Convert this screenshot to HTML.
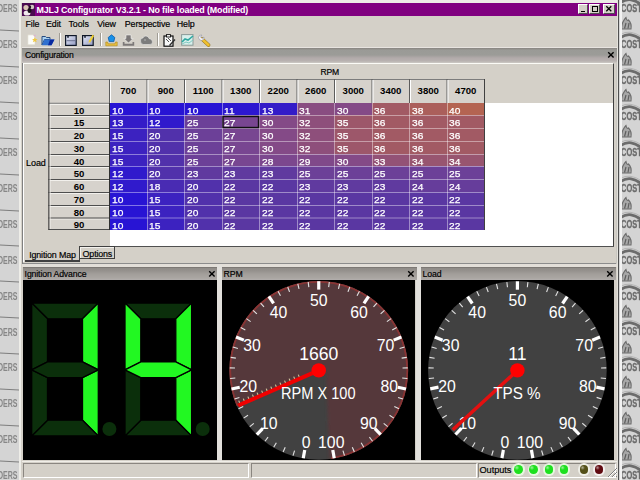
<!DOCTYPE html><html><head><meta charset="utf-8"><style>
*{margin:0;padding:0;box-sizing:border-box}
html,body{width:640px;height:480px;overflow:hidden;background:#d5d5d5;font-family:"Liberation Sans", sans-serif;}
.a{position:absolute}
.t{position:absolute;white-space:nowrap;line-height:1}
</style></head><body>
<div class="a" style="left:0;top:0;width:20px;height:480px;background:#d4d4d4;overflow:hidden">
<div class="t" style="right:2.3px;top:3.4px;font-size:11px;font-weight:bold;color:#878787;transform:scaleX(0.64);transform-origin:right">DERS</div>
<div class="a" style="left:-1px;top:30.0px;width:20px;height:1.3px;background:#7e7e7e;transform:rotate(2.5deg)"></div>
<div class="t" style="right:2.3px;top:39.3px;font-size:11px;font-weight:bold;color:#878787;transform:scaleX(0.64);transform-origin:right">DERS</div>
<div class="a" style="left:-1px;top:65.9px;width:20px;height:1.3px;background:#7e7e7e;transform:rotate(2.5deg)"></div>
<div class="t" style="right:2.3px;top:75.2px;font-size:11px;font-weight:bold;color:#878787;transform:scaleX(0.64);transform-origin:right">DERS</div>
<div class="a" style="left:-1px;top:101.8px;width:20px;height:1.3px;background:#7e7e7e;transform:rotate(2.5deg)"></div>
<div class="t" style="right:2.3px;top:111.1px;font-size:11px;font-weight:bold;color:#878787;transform:scaleX(0.64);transform-origin:right">DERS</div>
<div class="a" style="left:-1px;top:137.7px;width:20px;height:1.3px;background:#7e7e7e;transform:rotate(2.5deg)"></div>
<div class="t" style="right:2.3px;top:147.0px;font-size:11px;font-weight:bold;color:#878787;transform:scaleX(0.64);transform-origin:right">DERS</div>
<div class="a" style="left:-1px;top:173.6px;width:20px;height:1.3px;background:#7e7e7e;transform:rotate(2.5deg)"></div>
<div class="t" style="right:2.3px;top:182.9px;font-size:11px;font-weight:bold;color:#878787;transform:scaleX(0.64);transform-origin:right">DERS</div>
<div class="a" style="left:-1px;top:209.5px;width:20px;height:1.3px;background:#7e7e7e;transform:rotate(2.5deg)"></div>
<div class="t" style="right:2.3px;top:218.8px;font-size:11px;font-weight:bold;color:#878787;transform:scaleX(0.64);transform-origin:right">DERS</div>
<div class="a" style="left:-1px;top:245.4px;width:20px;height:1.3px;background:#7e7e7e;transform:rotate(2.5deg)"></div>
<div class="t" style="right:2.3px;top:254.7px;font-size:11px;font-weight:bold;color:#878787;transform:scaleX(0.64);transform-origin:right">DERS</div>
<div class="a" style="left:-1px;top:281.3px;width:20px;height:1.3px;background:#7e7e7e;transform:rotate(2.5deg)"></div>
<div class="t" style="right:2.3px;top:290.6px;font-size:11px;font-weight:bold;color:#878787;transform:scaleX(0.64);transform-origin:right">DERS</div>
<div class="a" style="left:-1px;top:317.2px;width:20px;height:1.3px;background:#7e7e7e;transform:rotate(2.5deg)"></div>
<div class="t" style="right:2.3px;top:326.5px;font-size:11px;font-weight:bold;color:#878787;transform:scaleX(0.64);transform-origin:right">DERS</div>
<div class="a" style="left:-1px;top:353.1px;width:20px;height:1.3px;background:#7e7e7e;transform:rotate(2.5deg)"></div>
<div class="t" style="right:2.3px;top:362.4px;font-size:11px;font-weight:bold;color:#878787;transform:scaleX(0.64);transform-origin:right">DERS</div>
<div class="a" style="left:-1px;top:389.0px;width:20px;height:1.3px;background:#7e7e7e;transform:rotate(2.5deg)"></div>
<div class="t" style="right:2.3px;top:398.3px;font-size:11px;font-weight:bold;color:#878787;transform:scaleX(0.64);transform-origin:right">DERS</div>
<div class="a" style="left:-1px;top:424.9px;width:20px;height:1.3px;background:#7e7e7e;transform:rotate(2.5deg)"></div>
<div class="t" style="right:2.3px;top:434.2px;font-size:11px;font-weight:bold;color:#878787;transform:scaleX(0.64);transform-origin:right">DERS</div>
<div class="a" style="left:-1px;top:460.8px;width:20px;height:1.3px;background:#7e7e7e;transform:rotate(2.5deg)"></div>
<div class="t" style="right:2.3px;top:470.1px;font-size:11px;font-weight:bold;color:#878787;transform:scaleX(0.64);transform-origin:right">DERS</div>
<div class="a" style="left:-1px;top:496.7px;width:20px;height:1.3px;background:#7e7e7e;transform:rotate(2.5deg)"></div>
</div>
<div class="a" style="left:620px;top:0;width:20px;height:480px;background:#d4d4d4;overflow:hidden">
<div class="t" style="left:1px;top:3.3px;font-size:11px;font-weight:bold;color:#6c6c6c;-webkit-text-stroke:0.35px #6c6c6c;transform:scaleX(0.68);transform-origin:left">COST</div>
<svg class="a" style="left:0;top:-19.5px" width="20" height="24"><path d="M1.5 13 C1.5 8 3.5 4 6 1.5 C6.5 4 7.5 5 8.5 4 C10.5 6 11.5 10 11 13 Z" fill="#a8a8a8" stroke="#6c6c6c" stroke-width="1.1"/><path d="M4.5 12.5 L6 7 M8 12.5 L9 7" stroke="#606060" stroke-width="1.2"/><path d="M0 18.8 Q5 15.5 10 16.2 Q16 17 21 20.5" stroke="#b4b4b4" stroke-width="1" fill="none"/><path d="M0 21.8 Q6 18 11 18.8 Q16 19.6 21 23.5" stroke="#6c6c6c" stroke-width="2.8" fill="none"/></svg>
<div class="t" style="left:1px;top:39.2px;font-size:11px;font-weight:bold;color:#6c6c6c;-webkit-text-stroke:0.35px #6c6c6c;transform:scaleX(0.68);transform-origin:left">COST</div>
<svg class="a" style="left:0;top:16.4px" width="20" height="24"><path d="M1.5 13 C1.5 8 3.5 4 6 1.5 C6.5 4 7.5 5 8.5 4 C10.5 6 11.5 10 11 13 Z" fill="#a8a8a8" stroke="#6c6c6c" stroke-width="1.1"/><path d="M4.5 12.5 L6 7 M8 12.5 L9 7" stroke="#606060" stroke-width="1.2"/><path d="M0 18.8 Q5 15.5 10 16.2 Q16 17 21 20.5" stroke="#b4b4b4" stroke-width="1" fill="none"/><path d="M0 21.8 Q6 18 11 18.8 Q16 19.6 21 23.5" stroke="#6c6c6c" stroke-width="2.8" fill="none"/></svg>
<div class="t" style="left:1px;top:75.1px;font-size:11px;font-weight:bold;color:#6c6c6c;-webkit-text-stroke:0.35px #6c6c6c;transform:scaleX(0.68);transform-origin:left">COST</div>
<svg class="a" style="left:0;top:52.3px" width="20" height="24"><path d="M1.5 13 C1.5 8 3.5 4 6 1.5 C6.5 4 7.5 5 8.5 4 C10.5 6 11.5 10 11 13 Z" fill="#a8a8a8" stroke="#6c6c6c" stroke-width="1.1"/><path d="M4.5 12.5 L6 7 M8 12.5 L9 7" stroke="#606060" stroke-width="1.2"/><path d="M0 18.8 Q5 15.5 10 16.2 Q16 17 21 20.5" stroke="#b4b4b4" stroke-width="1" fill="none"/><path d="M0 21.8 Q6 18 11 18.8 Q16 19.6 21 23.5" stroke="#6c6c6c" stroke-width="2.8" fill="none"/></svg>
<div class="t" style="left:1px;top:111.0px;font-size:11px;font-weight:bold;color:#6c6c6c;-webkit-text-stroke:0.35px #6c6c6c;transform:scaleX(0.68);transform-origin:left">COST</div>
<svg class="a" style="left:0;top:88.2px" width="20" height="24"><path d="M1.5 13 C1.5 8 3.5 4 6 1.5 C6.5 4 7.5 5 8.5 4 C10.5 6 11.5 10 11 13 Z" fill="#a8a8a8" stroke="#6c6c6c" stroke-width="1.1"/><path d="M4.5 12.5 L6 7 M8 12.5 L9 7" stroke="#606060" stroke-width="1.2"/><path d="M0 18.8 Q5 15.5 10 16.2 Q16 17 21 20.5" stroke="#b4b4b4" stroke-width="1" fill="none"/><path d="M0 21.8 Q6 18 11 18.8 Q16 19.6 21 23.5" stroke="#6c6c6c" stroke-width="2.8" fill="none"/></svg>
<div class="t" style="left:1px;top:146.9px;font-size:11px;font-weight:bold;color:#6c6c6c;-webkit-text-stroke:0.35px #6c6c6c;transform:scaleX(0.68);transform-origin:left">COST</div>
<svg class="a" style="left:0;top:124.1px" width="20" height="24"><path d="M1.5 13 C1.5 8 3.5 4 6 1.5 C6.5 4 7.5 5 8.5 4 C10.5 6 11.5 10 11 13 Z" fill="#a8a8a8" stroke="#6c6c6c" stroke-width="1.1"/><path d="M4.5 12.5 L6 7 M8 12.5 L9 7" stroke="#606060" stroke-width="1.2"/><path d="M0 18.8 Q5 15.5 10 16.2 Q16 17 21 20.5" stroke="#b4b4b4" stroke-width="1" fill="none"/><path d="M0 21.8 Q6 18 11 18.8 Q16 19.6 21 23.5" stroke="#6c6c6c" stroke-width="2.8" fill="none"/></svg>
<div class="t" style="left:1px;top:182.8px;font-size:11px;font-weight:bold;color:#6c6c6c;-webkit-text-stroke:0.35px #6c6c6c;transform:scaleX(0.68);transform-origin:left">COST</div>
<svg class="a" style="left:0;top:160.0px" width="20" height="24"><path d="M1.5 13 C1.5 8 3.5 4 6 1.5 C6.5 4 7.5 5 8.5 4 C10.5 6 11.5 10 11 13 Z" fill="#a8a8a8" stroke="#6c6c6c" stroke-width="1.1"/><path d="M4.5 12.5 L6 7 M8 12.5 L9 7" stroke="#606060" stroke-width="1.2"/><path d="M0 18.8 Q5 15.5 10 16.2 Q16 17 21 20.5" stroke="#b4b4b4" stroke-width="1" fill="none"/><path d="M0 21.8 Q6 18 11 18.8 Q16 19.6 21 23.5" stroke="#6c6c6c" stroke-width="2.8" fill="none"/></svg>
<div class="t" style="left:1px;top:218.7px;font-size:11px;font-weight:bold;color:#6c6c6c;-webkit-text-stroke:0.35px #6c6c6c;transform:scaleX(0.68);transform-origin:left">COST</div>
<svg class="a" style="left:0;top:195.9px" width="20" height="24"><path d="M1.5 13 C1.5 8 3.5 4 6 1.5 C6.5 4 7.5 5 8.5 4 C10.5 6 11.5 10 11 13 Z" fill="#a8a8a8" stroke="#6c6c6c" stroke-width="1.1"/><path d="M4.5 12.5 L6 7 M8 12.5 L9 7" stroke="#606060" stroke-width="1.2"/><path d="M0 18.8 Q5 15.5 10 16.2 Q16 17 21 20.5" stroke="#b4b4b4" stroke-width="1" fill="none"/><path d="M0 21.8 Q6 18 11 18.8 Q16 19.6 21 23.5" stroke="#6c6c6c" stroke-width="2.8" fill="none"/></svg>
<div class="t" style="left:1px;top:254.6px;font-size:11px;font-weight:bold;color:#6c6c6c;-webkit-text-stroke:0.35px #6c6c6c;transform:scaleX(0.68);transform-origin:left">COST</div>
<svg class="a" style="left:0;top:231.8px" width="20" height="24"><path d="M1.5 13 C1.5 8 3.5 4 6 1.5 C6.5 4 7.5 5 8.5 4 C10.5 6 11.5 10 11 13 Z" fill="#a8a8a8" stroke="#6c6c6c" stroke-width="1.1"/><path d="M4.5 12.5 L6 7 M8 12.5 L9 7" stroke="#606060" stroke-width="1.2"/><path d="M0 18.8 Q5 15.5 10 16.2 Q16 17 21 20.5" stroke="#b4b4b4" stroke-width="1" fill="none"/><path d="M0 21.8 Q6 18 11 18.8 Q16 19.6 21 23.5" stroke="#6c6c6c" stroke-width="2.8" fill="none"/></svg>
<div class="t" style="left:1px;top:290.5px;font-size:11px;font-weight:bold;color:#6c6c6c;-webkit-text-stroke:0.35px #6c6c6c;transform:scaleX(0.68);transform-origin:left">COST</div>
<svg class="a" style="left:0;top:267.7px" width="20" height="24"><path d="M1.5 13 C1.5 8 3.5 4 6 1.5 C6.5 4 7.5 5 8.5 4 C10.5 6 11.5 10 11 13 Z" fill="#a8a8a8" stroke="#6c6c6c" stroke-width="1.1"/><path d="M4.5 12.5 L6 7 M8 12.5 L9 7" stroke="#606060" stroke-width="1.2"/><path d="M0 18.8 Q5 15.5 10 16.2 Q16 17 21 20.5" stroke="#b4b4b4" stroke-width="1" fill="none"/><path d="M0 21.8 Q6 18 11 18.8 Q16 19.6 21 23.5" stroke="#6c6c6c" stroke-width="2.8" fill="none"/></svg>
<div class="t" style="left:1px;top:326.4px;font-size:11px;font-weight:bold;color:#6c6c6c;-webkit-text-stroke:0.35px #6c6c6c;transform:scaleX(0.68);transform-origin:left">COST</div>
<svg class="a" style="left:0;top:303.6px" width="20" height="24"><path d="M1.5 13 C1.5 8 3.5 4 6 1.5 C6.5 4 7.5 5 8.5 4 C10.5 6 11.5 10 11 13 Z" fill="#a8a8a8" stroke="#6c6c6c" stroke-width="1.1"/><path d="M4.5 12.5 L6 7 M8 12.5 L9 7" stroke="#606060" stroke-width="1.2"/><path d="M0 18.8 Q5 15.5 10 16.2 Q16 17 21 20.5" stroke="#b4b4b4" stroke-width="1" fill="none"/><path d="M0 21.8 Q6 18 11 18.8 Q16 19.6 21 23.5" stroke="#6c6c6c" stroke-width="2.8" fill="none"/></svg>
<div class="t" style="left:1px;top:362.3px;font-size:11px;font-weight:bold;color:#6c6c6c;-webkit-text-stroke:0.35px #6c6c6c;transform:scaleX(0.68);transform-origin:left">COST</div>
<svg class="a" style="left:0;top:339.5px" width="20" height="24"><path d="M1.5 13 C1.5 8 3.5 4 6 1.5 C6.5 4 7.5 5 8.5 4 C10.5 6 11.5 10 11 13 Z" fill="#a8a8a8" stroke="#6c6c6c" stroke-width="1.1"/><path d="M4.5 12.5 L6 7 M8 12.5 L9 7" stroke="#606060" stroke-width="1.2"/><path d="M0 18.8 Q5 15.5 10 16.2 Q16 17 21 20.5" stroke="#b4b4b4" stroke-width="1" fill="none"/><path d="M0 21.8 Q6 18 11 18.8 Q16 19.6 21 23.5" stroke="#6c6c6c" stroke-width="2.8" fill="none"/></svg>
<div class="t" style="left:1px;top:398.2px;font-size:11px;font-weight:bold;color:#6c6c6c;-webkit-text-stroke:0.35px #6c6c6c;transform:scaleX(0.68);transform-origin:left">COST</div>
<svg class="a" style="left:0;top:375.4px" width="20" height="24"><path d="M1.5 13 C1.5 8 3.5 4 6 1.5 C6.5 4 7.5 5 8.5 4 C10.5 6 11.5 10 11 13 Z" fill="#a8a8a8" stroke="#6c6c6c" stroke-width="1.1"/><path d="M4.5 12.5 L6 7 M8 12.5 L9 7" stroke="#606060" stroke-width="1.2"/><path d="M0 18.8 Q5 15.5 10 16.2 Q16 17 21 20.5" stroke="#b4b4b4" stroke-width="1" fill="none"/><path d="M0 21.8 Q6 18 11 18.8 Q16 19.6 21 23.5" stroke="#6c6c6c" stroke-width="2.8" fill="none"/></svg>
<div class="t" style="left:1px;top:434.1px;font-size:11px;font-weight:bold;color:#6c6c6c;-webkit-text-stroke:0.35px #6c6c6c;transform:scaleX(0.68);transform-origin:left">COST</div>
<svg class="a" style="left:0;top:411.3px" width="20" height="24"><path d="M1.5 13 C1.5 8 3.5 4 6 1.5 C6.5 4 7.5 5 8.5 4 C10.5 6 11.5 10 11 13 Z" fill="#a8a8a8" stroke="#6c6c6c" stroke-width="1.1"/><path d="M4.5 12.5 L6 7 M8 12.5 L9 7" stroke="#606060" stroke-width="1.2"/><path d="M0 18.8 Q5 15.5 10 16.2 Q16 17 21 20.5" stroke="#b4b4b4" stroke-width="1" fill="none"/><path d="M0 21.8 Q6 18 11 18.8 Q16 19.6 21 23.5" stroke="#6c6c6c" stroke-width="2.8" fill="none"/></svg>
<div class="t" style="left:1px;top:470.0px;font-size:11px;font-weight:bold;color:#6c6c6c;-webkit-text-stroke:0.35px #6c6c6c;transform:scaleX(0.68);transform-origin:left">COST</div>
<svg class="a" style="left:0;top:447.2px" width="20" height="24"><path d="M1.5 13 C1.5 8 3.5 4 6 1.5 C6.5 4 7.5 5 8.5 4 C10.5 6 11.5 10 11 13 Z" fill="#a8a8a8" stroke="#6c6c6c" stroke-width="1.1"/><path d="M4.5 12.5 L6 7 M8 12.5 L9 7" stroke="#606060" stroke-width="1.2"/><path d="M0 18.8 Q5 15.5 10 16.2 Q16 17 21 20.5" stroke="#b4b4b4" stroke-width="1" fill="none"/><path d="M0 21.8 Q6 18 11 18.8 Q16 19.6 21 23.5" stroke="#6c6c6c" stroke-width="2.8" fill="none"/></svg>
</div>
<div class="a" style="left:19px;top:0;width:600px;height:480px;background:#d4d0c8;border-left:2px solid #eeede8;border-top:3px solid #ecebe6;border-right:1px solid #484848"></div>
<div class="a" style="left:616.5px;top:0;width:2px;height:480px;background:#e4e2dc"></div>
<div class="a" style="left:617.8px;top:0;width:1.6px;height:480px;background:#505050"></div>
<div class="a" style="left:620px;top:0;width:1.5px;height:480px;background:#f2f2f2"></div>
<div class="a" style="left:22px;top:3px;width:595px;height:12.5px;background:#800080"></div>
<svg class="a" style="left:22.3px;top:3.2px" width="13" height="13"><rect width="13" height="13" fill="#4a0a50"/><circle cx="4" cy="4.5" r="2.6" fill="#d8c4b4"/><circle cx="10" cy="4" r="2.2" fill="#d0c8c0"/><ellipse cx="5" cy="10" rx="3.4" ry="2.6" fill="#f0e8ec"/><ellipse cx="7.5" cy="7.5" rx="2" ry="2.6" fill="#181018"/><circle cx="8" cy="4" r="1.2" fill="#201020"/></svg>
<div class="t" style="left:36.5px;top:5.5px;font-size:8.9px;font-weight:bold;color:#fff;letter-spacing:-0.12px">MJLJ Configurator V3.2.1 - No file loaded (Modified)</div>
<div class="a" style="left:577.5px;top:4px;width:10px;height:10.2px;background:#d4d0c8;border-top:1px solid #fff;border-left:1px solid #fff;border-right:1px solid #505050;border-bottom:1px solid #505050"></div>
<div class="a" style="left:589.3px;top:4px;width:10.7px;height:10.2px;background:#d4d0c8;border-top:1px solid #fff;border-left:1px solid #fff;border-right:1px solid #505050;border-bottom:1px solid #505050"></div>
<div class="a" style="left:602.7px;top:4px;width:12px;height:10.2px;background:#d4d0c8;border-top:1px solid #fff;border-left:1px solid #fff;border-right:1px solid #505050;border-bottom:1px solid #505050"></div>
<div class="a" style="left:581px;top:10.5px;width:4px;height:1.6px;background:#000"></div>
<div class="a" style="left:591.6px;top:6px;width:6.6px;height:6.2px;border:1px solid #000;border-top-width:1.8px"></div>
<svg class="a" style="left:602.7px;top:4px" width="12" height="10"><path d="M3.3 2.3 L8.3 7.3 M8.3 2.3 L3.3 7.3" stroke="#000" stroke-width="1.3"/></svg>
<div class="t" style="left:25.5px;top:20px;font-size:8.9px;color:#000;-webkit-text-stroke:0.18px #000;letter-spacing:-0.1px">File</div>
<div class="t" style="left:46.0px;top:20px;font-size:8.9px;color:#000;-webkit-text-stroke:0.18px #000;letter-spacing:-0.1px">Edit</div>
<div class="t" style="left:68.5px;top:20px;font-size:8.9px;color:#000;-webkit-text-stroke:0.18px #000;letter-spacing:-0.1px">Tools</div>
<div class="t" style="left:97.2px;top:20px;font-size:8.9px;color:#000;-webkit-text-stroke:0.18px #000;letter-spacing:-0.1px">View</div>
<div class="t" style="left:124.8px;top:20px;font-size:8.9px;color:#000;-webkit-text-stroke:0.18px #000;letter-spacing:-0.1px">Perspective</div>
<div class="t" style="left:176.8px;top:20px;font-size:8.9px;color:#000;-webkit-text-stroke:0.18px #000;letter-spacing:-0.1px">Help</div>
<div class="a" style="left:59px;top:33px;width:2px;height:13px;background:#a09c94;border-right:1px solid #fff"></div>
<div class="a" style="left:99.5px;top:33px;width:2px;height:13px;background:#a09c94;border-right:1px solid #fff"></div>
<div class="a" style="left:156.5px;top:33px;width:2px;height:13px;background:#a09c94;border-right:1px solid #fff"></div>
<svg class="a" style="left:26.5px;top:34px" width="12" height="12"><path d="M0.8 0.8 H6 L8 2.8 V10.8 H0.8 Z" fill="#fcfcf8" stroke="#d8d4c4" stroke-width="0.6"/><path d="M7.8 3 L8.6 4.9 L10.6 5 L9.1 6.3 L9.6 8.3 L7.8 7.2 L6 8.3 L6.5 6.3 L5 5 L7 4.9 Z" fill="#f0c840"/><circle cx="7.8" cy="1.8" r="1" fill="#e0a8d0" opacity="0.7"/></svg><svg class="a" style="left:40.5px;top:35px" width="14" height="11"><path d="M1 1.5 H4.5 L5.5 2.5 H9 V4.5 H3.5 L1 10 Z" fill="#a8d0f0" stroke="#284c80" stroke-width="1"/><path d="M3.5 4.5 H13.5 L10.5 10.2 H1 Z" fill="#3070d0"/><path d="M9 4.5 H13.5 L10.5 10.2 H7 Z" fill="#0a2aa0"/></svg><svg class="a" style="left:65px;top:34.5px" width="12" height="11"><defs><linearGradient id="fl" x1="0" y1="0" x2="1" y2="1"><stop offset="0" stop-color="#e8ecf8"/><stop offset="1" stop-color="#9098c0"/></linearGradient></defs><rect x="0.6" y="0.6" width="10.6" height="9.8" fill="url(#fl)" stroke="#101828" stroke-width="1.2"/><rect x="2.2" y="1" width="1.6" height="1.8" fill="#202838"/><rect x="1.5" y="5.2" width="9" height="1" fill="#6a7090"/></svg><svg class="a" style="left:81.5px;top:34px" width="13" height="12"><rect x="0.6" y="1.6" width="10.6" height="9.8" fill="url(#fl)" stroke="#101828" stroke-width="1.2"/><rect x="2.2" y="2" width="1.6" height="1.8" fill="#202838"/><path d="M6.5 7.5 L10.5 0.8 L12.2 1.8 L8.2 8.6 Z" fill="#f0d030"/><path d="M6.5 7.5 L8.2 8.6 L6 10 Z" fill="#d8c8a0"/></svg><svg class="a" style="left:105px;top:33.5px" width="13" height="13"><path d="M0.8 8 V11.8 H12.2 V8 L10.5 8 L10 9.8 H3 L2.5 8 Z" fill="#e8c040" stroke="#b08818" stroke-width="0.6"/><path d="M6.5 0.8 L9.8 3.5 L8.8 7.6 H4.2 L3.2 3.5 Z" fill="#1890e8" stroke="#0a5aa8" stroke-width="0.8"/></svg><svg class="a" style="left:122px;top:33.5px" width="13" height="13"><path d="M0.8 8 V11.8 H12.2 V8 H10.5 V9.8 H2.5 V8 Z" fill="#7c7878"/><path d="M4 1 H9 V4.5 H11 L6.5 9 L2 4.5 H4 Z" fill="#7c7878" stroke="#fff" stroke-width="0.5"/></svg><svg class="a" style="left:139px;top:34.5px" width="15" height="11"><path d="M1.5 6 Q1 3 4 3 Q4.5 0.8 7 1 Q9.5 1 10 3.5 Q13.5 4 13.5 7 Q13.5 10 10 9.5 H4.5 Q1.5 9.5 1.5 6 Z" fill="#7c7c7c" stroke="#f4f4f4" stroke-width="0.5"/><circle cx="6" cy="5" r="1" fill="#a0a0a0"/></svg><svg class="a" style="left:162.5px;top:33.5px" width="13" height="13"><rect x="1" y="2" width="9" height="10.2" fill="#f8f8f8" stroke="#101010" stroke-width="1.2"/><rect x="3.5" y="0.6" width="4" height="2.4" fill="#f8f8f8" stroke="#101010" stroke-width="0.9"/><path d="M3 5 L6 8 M5 4 L8 7" stroke="#505050" stroke-width="1"/><path d="M6 11 L11.5 5 L12.5 6 L7 12 Z" fill="#303030"/></svg><svg class="a" style="left:180.5px;top:34px" width="13" height="12"><rect x="0.6" y="0.6" width="11.4" height="10.6" fill="#d8f0ec" stroke="#8a9a98" stroke-width="1"/><path d="M1 8 L4 5 L7 6 L12 2" stroke="#30a8a0" stroke-width="1.6" fill="none"/><path d="M1 10 L5 8 L8 9 L12 6" stroke="#80c8c0" stroke-width="1" fill="none"/></svg><svg class="a" style="left:196.5px;top:33.5px" width="14" height="13"><path d="M5 5 L11.5 11" stroke="#8a6a10" stroke-width="3.6" stroke-linecap="round"/><path d="M5 5 L11.5 11" stroke="#f0c030" stroke-width="2.6" stroke-linecap="round"/><path d="M1.5 3.5 Q2 0.5 5 1 L3.5 3 L5 4.5 L7 3 Q7.5 6 4.5 6.5 Q2 6.5 1.5 3.5 Z" fill="#f4f4f8" stroke="#9090a0" stroke-width="0.6"/></svg>
<div class="a" style="left:22px;top:47px;width:595px;height:1px;background:#e8e4e0"></div>
<div class="a" style="left:22px;top:48px;width:595px;height:14.5px;background:linear-gradient(#888480 0px,#9a9a96 2px,#9c9c98 7px,#b2aaaa 10px,#b8b2b0 13px,#c8c4c0 14.5px)"></div>
<div class="t" style="left:25px;top:50.8px;font-size:8.6px;color:#000;-webkit-text-stroke:0.18px #000;letter-spacing:-0.2px">Configuration</div>
<svg class="a" style="left:607px;top:51px" width="8" height="8"><path d="M1.2 1.2 L6.6 6.6 M6.6 1.2 L1.2 6.6" stroke="#000" stroke-width="1.4"/></svg>
<div class="a" style="left:22px;top:62.5px;width:595px;height:202.5px;background:#d4d0c8;border-left:1px solid #808080;border-right:1px solid #c8c6c0;border-bottom:1px solid #fff"></div>
<div class="a" style="left:23px;top:262.8px;width:593px;height:1px;background:#8c8c8c"></div>
<div class="a" style="left:23px;top:62.8px;width:591px;height:184.2px;border-top:1.2px solid #fbfbf6;border-left:1px solid #fff;border-right:1.2px solid #404040"></div>
<div class="a" style="left:79.5px;top:245.8px;width:534.5px;height:1.2px;background:#505050"></div>
<div class="a" style="left:23px;top:245px;width:1px;height:17px;background:#fff"></div>
<div class="a" style="left:109.5px;top:102.5px;width:503.3px;height:143.3px;background:#fff"></div>
<div class="t" style="left:320.5px;top:67.6px;font-size:8.6px;color:#000;-webkit-text-stroke:0.18px #000;letter-spacing:-0.2px">RPM</div>
<div class="t" style="left:26px;top:159.2px;font-size:9px;color:#000;-webkit-text-stroke:0.18px #000;letter-spacing:-0.05px">Load</div>
<svg class="a" style="left:0;top:0" width="640" height="480"><rect x="48.5" y="79" width="436.0" height="24" fill="#d6d2cc"/><rect x="48.5" y="79" width="436.0" height="1" fill="#7c7c7c"/><rect x="109.00" y="79" width="1" height="24" fill="#5c5c5c"/><rect x="110.00" y="80" width="1" height="23" fill="#fff"/><rect x="146.50" y="79" width="1" height="24" fill="#5c5c5c"/><rect x="147.50" y="80" width="1" height="23" fill="#fff"/><rect x="184.00" y="79" width="1" height="24" fill="#5c5c5c"/><rect x="185.00" y="80" width="1" height="23" fill="#fff"/><rect x="221.50" y="79" width="1" height="24" fill="#5c5c5c"/><rect x="222.50" y="80" width="1" height="23" fill="#fff"/><rect x="259.00" y="79" width="1" height="24" fill="#5c5c5c"/><rect x="260.00" y="80" width="1" height="23" fill="#fff"/><rect x="296.50" y="79" width="1" height="24" fill="#5c5c5c"/><rect x="297.50" y="80" width="1" height="23" fill="#fff"/><rect x="334.00" y="79" width="1" height="24" fill="#5c5c5c"/><rect x="335.00" y="80" width="1" height="23" fill="#fff"/><rect x="371.50" y="79" width="1" height="24" fill="#5c5c5c"/><rect x="372.50" y="80" width="1" height="23" fill="#fff"/><rect x="409.00" y="79" width="1" height="24" fill="#5c5c5c"/><rect x="410.00" y="80" width="1" height="23" fill="#fff"/><rect x="446.50" y="79" width="1" height="24" fill="#5c5c5c"/><rect x="447.50" y="80" width="1" height="23" fill="#fff"/><rect x="484.00" y="79" width="1" height="24" fill="#5c5c5c"/><rect x="48.5" y="103" width="61.0" height="12" fill="#d6d2cc"/><rect x="49.5" y="104" width="59.5" height="1" fill="#f2f0ec"/><rect x="48.5" y="115" width="61.0" height="13" fill="#d6d2cc"/><rect x="49.5" y="116" width="59.5" height="1" fill="#f2f0ec"/><rect x="48.5" y="115" width="61.0" height="1" fill="#4e4e4e"/><rect x="48.5" y="128" width="61.0" height="13" fill="#d6d2cc"/><rect x="49.5" y="129" width="59.5" height="1" fill="#f2f0ec"/><rect x="48.5" y="128" width="61.0" height="1" fill="#4e4e4e"/><rect x="48.5" y="141" width="61.0" height="13" fill="#d6d2cc"/><rect x="49.5" y="142" width="59.5" height="1" fill="#f2f0ec"/><rect x="48.5" y="141" width="61.0" height="1" fill="#4e4e4e"/><rect x="48.5" y="154" width="61.0" height="12" fill="#d6d2cc"/><rect x="49.5" y="155" width="59.5" height="1" fill="#f2f0ec"/><rect x="48.5" y="154" width="61.0" height="1" fill="#4e4e4e"/><rect x="48.5" y="166" width="61.0" height="13" fill="#d6d2cc"/><rect x="49.5" y="167" width="59.5" height="1" fill="#f2f0ec"/><rect x="48.5" y="166" width="61.0" height="1" fill="#4e4e4e"/><rect x="48.5" y="179" width="61.0" height="13" fill="#d6d2cc"/><rect x="49.5" y="180" width="59.5" height="1" fill="#f2f0ec"/><rect x="48.5" y="179" width="61.0" height="1" fill="#4e4e4e"/><rect x="48.5" y="192" width="61.0" height="13" fill="#d6d2cc"/><rect x="49.5" y="193" width="59.5" height="1" fill="#f2f0ec"/><rect x="48.5" y="192" width="61.0" height="1" fill="#4e4e4e"/><rect x="48.5" y="205" width="61.0" height="12.5" fill="#d6d2cc"/><rect x="49.5" y="206" width="59.5" height="1" fill="#f2f0ec"/><rect x="48.5" y="205" width="61.0" height="1" fill="#4e4e4e"/><rect x="48.5" y="217.5" width="61.0" height="12.5" fill="#d6d2cc"/><rect x="49.5" y="218.5" width="59.5" height="1" fill="#f2f0ec"/><rect x="48.5" y="217.5" width="61.0" height="1" fill="#4e4e4e"/><rect x="48.5" y="102.7" width="61.0" height="1.2" fill="#8a8a8a"/><rect x="48.5" y="229" width="61.0" height="1" fill="#4e4e4e"/><rect x="49.5" y="104" width="1" height="125" fill="#f2f0ec"/><rect x="48.3" y="79" width="1.1" height="151" fill="#383838"/><rect x="109.50" y="103" width="38.50" height="13.00" fill="#2814d4"/><rect x="147.00" y="103" width="38.50" height="13.00" fill="#2814d4"/><rect x="184.50" y="103" width="38.50" height="13.00" fill="#2814d4"/><rect x="222.00" y="103" width="38.50" height="13.00" fill="#2c17d0"/><rect x="259.50" y="103" width="38.50" height="13.00" fill="#341cc8"/><rect x="297.00" y="103" width="38.50" height="13.00" fill="#894d81"/><rect x="334.50" y="103" width="38.50" height="13.00" fill="#844a87"/><rect x="372.00" y="103" width="38.50" height="13.00" fill="#a25a64"/><rect x="409.50" y="103" width="38.50" height="13.00" fill="#ab5f5b"/><rect x="447.00" y="103" width="37.50" height="13.00" fill="#b46452"/><rect x="109.50" y="115" width="38.50" height="14.00" fill="#341cc8"/><rect x="147.00" y="115" width="38.50" height="14.00" fill="#301acc"/><rect x="184.50" y="115" width="38.50" height="14.00" fill="#6c4098"/><rect x="222.00" y="115" width="38.50" height="14.00" fill="#784691"/><rect x="259.50" y="115" width="38.50" height="14.00" fill="#844a87"/><rect x="297.00" y="115" width="38.50" height="14.00" fill="#8e4f7b"/><rect x="334.50" y="115" width="38.50" height="14.00" fill="#9d576a"/><rect x="372.00" y="115" width="38.50" height="14.00" fill="#a25a64"/><rect x="409.50" y="115" width="38.50" height="14.00" fill="#a25a64"/><rect x="447.00" y="115" width="37.50" height="14.00" fill="#a25a64"/><rect x="109.50" y="128" width="38.50" height="14.00" fill="#3c22c0"/><rect x="147.00" y="128" width="38.50" height="14.00" fill="#5131ab"/><rect x="184.50" y="128" width="38.50" height="14.00" fill="#6c4098"/><rect x="222.00" y="128" width="38.50" height="14.00" fill="#784691"/><rect x="259.50" y="128" width="38.50" height="14.00" fill="#844a87"/><rect x="297.00" y="128" width="38.50" height="14.00" fill="#8e4f7b"/><rect x="334.50" y="128" width="38.50" height="14.00" fill="#9d576a"/><rect x="372.00" y="128" width="38.50" height="14.00" fill="#a25a64"/><rect x="409.50" y="128" width="38.50" height="14.00" fill="#a25a64"/><rect x="447.00" y="128" width="37.50" height="14.00" fill="#a25a64"/><rect x="109.50" y="141" width="38.50" height="14.00" fill="#3c22c0"/><rect x="147.00" y="141" width="38.50" height="14.00" fill="#5131ab"/><rect x="184.50" y="141" width="38.50" height="14.00" fill="#6c4098"/><rect x="222.00" y="141" width="38.50" height="14.00" fill="#784691"/><rect x="259.50" y="141" width="38.50" height="14.00" fill="#844a87"/><rect x="297.00" y="141" width="38.50" height="14.00" fill="#8e4f7b"/><rect x="334.50" y="141" width="38.50" height="14.00" fill="#9d576a"/><rect x="372.00" y="141" width="38.50" height="14.00" fill="#a25a64"/><rect x="409.50" y="141" width="38.50" height="14.00" fill="#a25a64"/><rect x="447.00" y="141" width="37.50" height="14.00" fill="#a25a64"/><rect x="109.50" y="154" width="38.50" height="13.00" fill="#3c22c0"/><rect x="147.00" y="154" width="38.50" height="13.00" fill="#5131ab"/><rect x="184.50" y="154" width="38.50" height="13.00" fill="#6c4098"/><rect x="222.00" y="154" width="38.50" height="13.00" fill="#784691"/><rect x="259.50" y="154" width="38.50" height="13.00" fill="#7c478e"/><rect x="297.00" y="154" width="38.50" height="13.00" fill="#80498a"/><rect x="334.50" y="154" width="38.50" height="13.00" fill="#844a87"/><rect x="372.00" y="154" width="38.50" height="13.00" fill="#935276"/><rect x="409.50" y="154" width="38.50" height="13.00" fill="#985570"/><rect x="447.00" y="154" width="37.50" height="13.00" fill="#985570"/><rect x="109.50" y="166" width="38.50" height="14.00" fill="#301acc"/><rect x="147.00" y="166" width="38.50" height="14.00" fill="#5131ab"/><rect x="184.50" y="166" width="38.50" height="14.00" fill="#603a9f"/><rect x="222.00" y="166" width="38.50" height="14.00" fill="#603a9f"/><rect x="259.50" y="166" width="38.50" height="14.00" fill="#603a9f"/><rect x="297.00" y="166" width="38.50" height="14.00" fill="#6c4098"/><rect x="334.50" y="166" width="38.50" height="14.00" fill="#6c4098"/><rect x="372.00" y="166" width="38.50" height="14.00" fill="#6c4098"/><rect x="409.50" y="166" width="38.50" height="14.00" fill="#6c4098"/><rect x="447.00" y="166" width="37.50" height="14.00" fill="#6c4098"/><rect x="109.50" y="179" width="38.50" height="14.00" fill="#301acc"/><rect x="147.00" y="179" width="38.50" height="14.00" fill="#492bb3"/><rect x="184.50" y="179" width="38.50" height="14.00" fill="#5131ab"/><rect x="222.00" y="179" width="38.50" height="14.00" fill="#5a37a2"/><rect x="259.50" y="179" width="38.50" height="14.00" fill="#5a37a2"/><rect x="297.00" y="179" width="38.50" height="14.00" fill="#603a9f"/><rect x="334.50" y="179" width="38.50" height="14.00" fill="#603a9f"/><rect x="372.00" y="179" width="38.50" height="14.00" fill="#603a9f"/><rect x="409.50" y="179" width="38.50" height="14.00" fill="#663d9b"/><rect x="447.00" y="179" width="37.50" height="14.00" fill="#663d9b"/><rect x="109.50" y="192" width="38.50" height="14.00" fill="#2814d4"/><rect x="147.00" y="192" width="38.50" height="14.00" fill="#3c22c0"/><rect x="184.50" y="192" width="38.50" height="14.00" fill="#5131ab"/><rect x="222.00" y="192" width="38.50" height="14.00" fill="#5a37a2"/><rect x="259.50" y="192" width="38.50" height="14.00" fill="#5a37a2"/><rect x="297.00" y="192" width="38.50" height="14.00" fill="#5a37a2"/><rect x="334.50" y="192" width="38.50" height="14.00" fill="#5a37a2"/><rect x="372.00" y="192" width="38.50" height="14.00" fill="#5a37a2"/><rect x="409.50" y="192" width="38.50" height="14.00" fill="#5a37a2"/><rect x="447.00" y="192" width="37.50" height="14.00" fill="#5a37a2"/><rect x="109.50" y="205" width="38.50" height="13.50" fill="#2814d4"/><rect x="147.00" y="205" width="38.50" height="13.50" fill="#3c22c0"/><rect x="184.50" y="205" width="38.50" height="13.50" fill="#5131ab"/><rect x="222.00" y="205" width="38.50" height="13.50" fill="#5a37a2"/><rect x="259.50" y="205" width="38.50" height="13.50" fill="#5a37a2"/><rect x="297.00" y="205" width="38.50" height="13.50" fill="#5a37a2"/><rect x="334.50" y="205" width="38.50" height="13.50" fill="#5a37a2"/><rect x="372.00" y="205" width="38.50" height="13.50" fill="#5a37a2"/><rect x="409.50" y="205" width="38.50" height="13.50" fill="#5a37a2"/><rect x="447.00" y="205" width="37.50" height="13.50" fill="#5a37a2"/><rect x="109.50" y="217.5" width="38.50" height="12.50" fill="#2814d4"/><rect x="147.00" y="217.5" width="38.50" height="12.50" fill="#3c22c0"/><rect x="184.50" y="217.5" width="38.50" height="12.50" fill="#5131ab"/><rect x="222.00" y="217.5" width="38.50" height="12.50" fill="#5a37a2"/><rect x="259.50" y="217.5" width="38.50" height="12.50" fill="#5a37a2"/><rect x="297.00" y="217.5" width="38.50" height="12.50" fill="#5a37a2"/><rect x="334.50" y="217.5" width="38.50" height="12.50" fill="#5a37a2"/><rect x="372.00" y="217.5" width="38.50" height="12.50" fill="#5a37a2"/><rect x="409.50" y="217.5" width="38.50" height="12.50" fill="#5a37a2"/><rect x="447.00" y="217.5" width="37.50" height="12.50" fill="#5a37a2"/><rect x="109.5" y="115" width="375.0" height="1" fill="rgba(255,255,255,0.42)"/><rect x="109.5" y="128" width="375.0" height="1" fill="rgba(255,255,255,0.42)"/><rect x="109.5" y="141" width="375.0" height="1" fill="rgba(255,255,255,0.42)"/><rect x="109.5" y="154" width="375.0" height="1" fill="rgba(255,255,255,0.42)"/><rect x="109.5" y="166" width="375.0" height="1" fill="rgba(255,255,255,0.42)"/><rect x="109.5" y="179" width="375.0" height="1" fill="rgba(255,255,255,0.42)"/><rect x="109.5" y="192" width="375.0" height="1" fill="rgba(255,255,255,0.42)"/><rect x="109.5" y="205" width="375.0" height="1" fill="rgba(255,255,255,0.42)"/><rect x="109.5" y="217.5" width="375.0" height="1" fill="rgba(255,255,255,0.42)"/><rect x="147" y="103" width="1" height="127" fill="rgba(255,255,255,0.42)"/><rect x="184" y="103" width="1" height="127" fill="rgba(255,255,255,0.42)"/><rect x="222" y="103" width="1" height="127" fill="rgba(255,255,255,0.42)"/><rect x="259" y="103" width="1" height="127" fill="rgba(255,255,255,0.42)"/><rect x="297" y="103" width="1" height="127" fill="rgba(255,255,255,0.42)"/><rect x="334" y="103" width="1" height="127" fill="rgba(255,255,255,0.42)"/><rect x="372" y="103" width="1" height="127" fill="rgba(255,255,255,0.42)"/><rect x="409" y="103" width="1" height="127" fill="rgba(255,255,255,0.42)"/><rect x="447" y="103" width="1" height="127" fill="rgba(255,255,255,0.42)"/><rect x="109.0" y="103" width="1" height="127" fill="#303030"/><rect x="484.0" y="79" width="1" height="151" fill="#404040"/><rect x="223.0" y="116.5" width="35.5" height="11" fill="none" stroke="#101010" stroke-width="1.4"/></svg>
<div class="t" style="left:109.50px;width:37.50px;top:86.4px;text-align:center;font-size:9.6px;font-weight:bold;color:#000">700</div>
<div class="t" style="left:147.00px;width:37.50px;top:86.4px;text-align:center;font-size:9.6px;font-weight:bold;color:#000">900</div>
<div class="t" style="left:184.50px;width:37.50px;top:86.4px;text-align:center;font-size:9.6px;font-weight:bold;color:#000">1100</div>
<div class="t" style="left:222.00px;width:37.50px;top:86.4px;text-align:center;font-size:9.6px;font-weight:bold;color:#000">1300</div>
<div class="t" style="left:259.50px;width:37.50px;top:86.4px;text-align:center;font-size:9.6px;font-weight:bold;color:#000">2200</div>
<div class="t" style="left:297.00px;width:37.50px;top:86.4px;text-align:center;font-size:9.6px;font-weight:bold;color:#000">2600</div>
<div class="t" style="left:334.50px;width:37.50px;top:86.4px;text-align:center;font-size:9.6px;font-weight:bold;color:#000">3000</div>
<div class="t" style="left:372.00px;width:37.50px;top:86.4px;text-align:center;font-size:9.6px;font-weight:bold;color:#000">3400</div>
<div class="t" style="left:409.50px;width:37.50px;top:86.4px;text-align:center;font-size:9.6px;font-weight:bold;color:#000">3800</div>
<div class="t" style="left:447.00px;width:37.50px;top:86.4px;text-align:center;font-size:9.6px;font-weight:bold;color:#000">4700</div>
<div class="t" style="left:48.5px;width:61.0px;top:105.50px;text-align:center;font-size:9.6px;font-weight:bold;color:#000">10</div>
<div class="t" style="left:111.50px;top:106.30px;font-size:9.6px;color:#fff;-webkit-text-stroke:0.25px #fff;transform:scaleX(1.06);transform-origin:left">10</div>
<div class="t" style="left:149.00px;top:106.30px;font-size:9.6px;color:#fff;-webkit-text-stroke:0.25px #fff;transform:scaleX(1.06);transform-origin:left">10</div>
<div class="t" style="left:186.50px;top:106.30px;font-size:9.6px;color:#fff;-webkit-text-stroke:0.25px #fff;transform:scaleX(1.06);transform-origin:left">10</div>
<div class="t" style="left:224.00px;top:106.30px;font-size:9.6px;color:#fff;-webkit-text-stroke:0.25px #fff;transform:scaleX(1.06);transform-origin:left">11</div>
<div class="t" style="left:261.50px;top:106.30px;font-size:9.6px;color:#fff;-webkit-text-stroke:0.25px #fff;transform:scaleX(1.06);transform-origin:left">13</div>
<div class="t" style="left:299.00px;top:106.30px;font-size:9.6px;color:#fff;-webkit-text-stroke:0.25px #fff;transform:scaleX(1.06);transform-origin:left">31</div>
<div class="t" style="left:336.50px;top:106.30px;font-size:9.6px;color:#fff;-webkit-text-stroke:0.25px #fff;transform:scaleX(1.06);transform-origin:left">30</div>
<div class="t" style="left:374.00px;top:106.30px;font-size:9.6px;color:#fff;-webkit-text-stroke:0.25px #fff;transform:scaleX(1.06);transform-origin:left">36</div>
<div class="t" style="left:411.50px;top:106.30px;font-size:9.6px;color:#fff;-webkit-text-stroke:0.25px #fff;transform:scaleX(1.06);transform-origin:left">38</div>
<div class="t" style="left:449.00px;top:106.30px;font-size:9.6px;color:#fff;-webkit-text-stroke:0.25px #fff;transform:scaleX(1.06);transform-origin:left">40</div>
<div class="t" style="left:48.5px;width:61.0px;top:117.50px;text-align:center;font-size:9.6px;font-weight:bold;color:#000">15</div>
<div class="t" style="left:111.50px;top:118.30px;font-size:9.6px;color:#fff;-webkit-text-stroke:0.25px #fff;transform:scaleX(1.06);transform-origin:left">13</div>
<div class="t" style="left:149.00px;top:118.30px;font-size:9.6px;color:#fff;-webkit-text-stroke:0.25px #fff;transform:scaleX(1.06);transform-origin:left">12</div>
<div class="t" style="left:186.50px;top:118.30px;font-size:9.6px;color:#fff;-webkit-text-stroke:0.25px #fff;transform:scaleX(1.06);transform-origin:left">25</div>
<div class="t" style="left:224.00px;top:118.30px;font-size:9.6px;color:#fff;-webkit-text-stroke:0.25px #fff;transform:scaleX(1.06);transform-origin:left">27</div>
<div class="t" style="left:261.50px;top:118.30px;font-size:9.6px;color:#fff;-webkit-text-stroke:0.25px #fff;transform:scaleX(1.06);transform-origin:left">30</div>
<div class="t" style="left:299.00px;top:118.30px;font-size:9.6px;color:#fff;-webkit-text-stroke:0.25px #fff;transform:scaleX(1.06);transform-origin:left">32</div>
<div class="t" style="left:336.50px;top:118.30px;font-size:9.6px;color:#fff;-webkit-text-stroke:0.25px #fff;transform:scaleX(1.06);transform-origin:left">35</div>
<div class="t" style="left:374.00px;top:118.30px;font-size:9.6px;color:#fff;-webkit-text-stroke:0.25px #fff;transform:scaleX(1.06);transform-origin:left">36</div>
<div class="t" style="left:411.50px;top:118.30px;font-size:9.6px;color:#fff;-webkit-text-stroke:0.25px #fff;transform:scaleX(1.06);transform-origin:left">36</div>
<div class="t" style="left:449.00px;top:118.30px;font-size:9.6px;color:#fff;-webkit-text-stroke:0.25px #fff;transform:scaleX(1.06);transform-origin:left">36</div>
<div class="t" style="left:48.5px;width:61.0px;top:130.50px;text-align:center;font-size:9.6px;font-weight:bold;color:#000">20</div>
<div class="t" style="left:111.50px;top:131.30px;font-size:9.6px;color:#fff;-webkit-text-stroke:0.25px #fff;transform:scaleX(1.06);transform-origin:left">15</div>
<div class="t" style="left:149.00px;top:131.30px;font-size:9.6px;color:#fff;-webkit-text-stroke:0.25px #fff;transform:scaleX(1.06);transform-origin:left">20</div>
<div class="t" style="left:186.50px;top:131.30px;font-size:9.6px;color:#fff;-webkit-text-stroke:0.25px #fff;transform:scaleX(1.06);transform-origin:left">25</div>
<div class="t" style="left:224.00px;top:131.30px;font-size:9.6px;color:#fff;-webkit-text-stroke:0.25px #fff;transform:scaleX(1.06);transform-origin:left">27</div>
<div class="t" style="left:261.50px;top:131.30px;font-size:9.6px;color:#fff;-webkit-text-stroke:0.25px #fff;transform:scaleX(1.06);transform-origin:left">30</div>
<div class="t" style="left:299.00px;top:131.30px;font-size:9.6px;color:#fff;-webkit-text-stroke:0.25px #fff;transform:scaleX(1.06);transform-origin:left">32</div>
<div class="t" style="left:336.50px;top:131.30px;font-size:9.6px;color:#fff;-webkit-text-stroke:0.25px #fff;transform:scaleX(1.06);transform-origin:left">35</div>
<div class="t" style="left:374.00px;top:131.30px;font-size:9.6px;color:#fff;-webkit-text-stroke:0.25px #fff;transform:scaleX(1.06);transform-origin:left">36</div>
<div class="t" style="left:411.50px;top:131.30px;font-size:9.6px;color:#fff;-webkit-text-stroke:0.25px #fff;transform:scaleX(1.06);transform-origin:left">36</div>
<div class="t" style="left:449.00px;top:131.30px;font-size:9.6px;color:#fff;-webkit-text-stroke:0.25px #fff;transform:scaleX(1.06);transform-origin:left">36</div>
<div class="t" style="left:48.5px;width:61.0px;top:143.50px;text-align:center;font-size:9.6px;font-weight:bold;color:#000">30</div>
<div class="t" style="left:111.50px;top:144.30px;font-size:9.6px;color:#fff;-webkit-text-stroke:0.25px #fff;transform:scaleX(1.06);transform-origin:left">15</div>
<div class="t" style="left:149.00px;top:144.30px;font-size:9.6px;color:#fff;-webkit-text-stroke:0.25px #fff;transform:scaleX(1.06);transform-origin:left">20</div>
<div class="t" style="left:186.50px;top:144.30px;font-size:9.6px;color:#fff;-webkit-text-stroke:0.25px #fff;transform:scaleX(1.06);transform-origin:left">25</div>
<div class="t" style="left:224.00px;top:144.30px;font-size:9.6px;color:#fff;-webkit-text-stroke:0.25px #fff;transform:scaleX(1.06);transform-origin:left">27</div>
<div class="t" style="left:261.50px;top:144.30px;font-size:9.6px;color:#fff;-webkit-text-stroke:0.25px #fff;transform:scaleX(1.06);transform-origin:left">30</div>
<div class="t" style="left:299.00px;top:144.30px;font-size:9.6px;color:#fff;-webkit-text-stroke:0.25px #fff;transform:scaleX(1.06);transform-origin:left">32</div>
<div class="t" style="left:336.50px;top:144.30px;font-size:9.6px;color:#fff;-webkit-text-stroke:0.25px #fff;transform:scaleX(1.06);transform-origin:left">35</div>
<div class="t" style="left:374.00px;top:144.30px;font-size:9.6px;color:#fff;-webkit-text-stroke:0.25px #fff;transform:scaleX(1.06);transform-origin:left">36</div>
<div class="t" style="left:411.50px;top:144.30px;font-size:9.6px;color:#fff;-webkit-text-stroke:0.25px #fff;transform:scaleX(1.06);transform-origin:left">36</div>
<div class="t" style="left:449.00px;top:144.30px;font-size:9.6px;color:#fff;-webkit-text-stroke:0.25px #fff;transform:scaleX(1.06);transform-origin:left">36</div>
<div class="t" style="left:48.5px;width:61.0px;top:156.50px;text-align:center;font-size:9.6px;font-weight:bold;color:#000">40</div>
<div class="t" style="left:111.50px;top:157.30px;font-size:9.6px;color:#fff;-webkit-text-stroke:0.25px #fff;transform:scaleX(1.06);transform-origin:left">15</div>
<div class="t" style="left:149.00px;top:157.30px;font-size:9.6px;color:#fff;-webkit-text-stroke:0.25px #fff;transform:scaleX(1.06);transform-origin:left">20</div>
<div class="t" style="left:186.50px;top:157.30px;font-size:9.6px;color:#fff;-webkit-text-stroke:0.25px #fff;transform:scaleX(1.06);transform-origin:left">25</div>
<div class="t" style="left:224.00px;top:157.30px;font-size:9.6px;color:#fff;-webkit-text-stroke:0.25px #fff;transform:scaleX(1.06);transform-origin:left">27</div>
<div class="t" style="left:261.50px;top:157.30px;font-size:9.6px;color:#fff;-webkit-text-stroke:0.25px #fff;transform:scaleX(1.06);transform-origin:left">28</div>
<div class="t" style="left:299.00px;top:157.30px;font-size:9.6px;color:#fff;-webkit-text-stroke:0.25px #fff;transform:scaleX(1.06);transform-origin:left">29</div>
<div class="t" style="left:336.50px;top:157.30px;font-size:9.6px;color:#fff;-webkit-text-stroke:0.25px #fff;transform:scaleX(1.06);transform-origin:left">30</div>
<div class="t" style="left:374.00px;top:157.30px;font-size:9.6px;color:#fff;-webkit-text-stroke:0.25px #fff;transform:scaleX(1.06);transform-origin:left">33</div>
<div class="t" style="left:411.50px;top:157.30px;font-size:9.6px;color:#fff;-webkit-text-stroke:0.25px #fff;transform:scaleX(1.06);transform-origin:left">34</div>
<div class="t" style="left:449.00px;top:157.30px;font-size:9.6px;color:#fff;-webkit-text-stroke:0.25px #fff;transform:scaleX(1.06);transform-origin:left">34</div>
<div class="t" style="left:48.5px;width:61.0px;top:168.50px;text-align:center;font-size:9.6px;font-weight:bold;color:#000">50</div>
<div class="t" style="left:111.50px;top:169.30px;font-size:9.6px;color:#fff;-webkit-text-stroke:0.25px #fff;transform:scaleX(1.06);transform-origin:left">12</div>
<div class="t" style="left:149.00px;top:169.30px;font-size:9.6px;color:#fff;-webkit-text-stroke:0.25px #fff;transform:scaleX(1.06);transform-origin:left">20</div>
<div class="t" style="left:186.50px;top:169.30px;font-size:9.6px;color:#fff;-webkit-text-stroke:0.25px #fff;transform:scaleX(1.06);transform-origin:left">23</div>
<div class="t" style="left:224.00px;top:169.30px;font-size:9.6px;color:#fff;-webkit-text-stroke:0.25px #fff;transform:scaleX(1.06);transform-origin:left">23</div>
<div class="t" style="left:261.50px;top:169.30px;font-size:9.6px;color:#fff;-webkit-text-stroke:0.25px #fff;transform:scaleX(1.06);transform-origin:left">23</div>
<div class="t" style="left:299.00px;top:169.30px;font-size:9.6px;color:#fff;-webkit-text-stroke:0.25px #fff;transform:scaleX(1.06);transform-origin:left">25</div>
<div class="t" style="left:336.50px;top:169.30px;font-size:9.6px;color:#fff;-webkit-text-stroke:0.25px #fff;transform:scaleX(1.06);transform-origin:left">25</div>
<div class="t" style="left:374.00px;top:169.30px;font-size:9.6px;color:#fff;-webkit-text-stroke:0.25px #fff;transform:scaleX(1.06);transform-origin:left">25</div>
<div class="t" style="left:411.50px;top:169.30px;font-size:9.6px;color:#fff;-webkit-text-stroke:0.25px #fff;transform:scaleX(1.06);transform-origin:left">25</div>
<div class="t" style="left:449.00px;top:169.30px;font-size:9.6px;color:#fff;-webkit-text-stroke:0.25px #fff;transform:scaleX(1.06);transform-origin:left">25</div>
<div class="t" style="left:48.5px;width:61.0px;top:181.50px;text-align:center;font-size:9.6px;font-weight:bold;color:#000">60</div>
<div class="t" style="left:111.50px;top:182.30px;font-size:9.6px;color:#fff;-webkit-text-stroke:0.25px #fff;transform:scaleX(1.06);transform-origin:left">12</div>
<div class="t" style="left:149.00px;top:182.30px;font-size:9.6px;color:#fff;-webkit-text-stroke:0.25px #fff;transform:scaleX(1.06);transform-origin:left">18</div>
<div class="t" style="left:186.50px;top:182.30px;font-size:9.6px;color:#fff;-webkit-text-stroke:0.25px #fff;transform:scaleX(1.06);transform-origin:left">20</div>
<div class="t" style="left:224.00px;top:182.30px;font-size:9.6px;color:#fff;-webkit-text-stroke:0.25px #fff;transform:scaleX(1.06);transform-origin:left">22</div>
<div class="t" style="left:261.50px;top:182.30px;font-size:9.6px;color:#fff;-webkit-text-stroke:0.25px #fff;transform:scaleX(1.06);transform-origin:left">22</div>
<div class="t" style="left:299.00px;top:182.30px;font-size:9.6px;color:#fff;-webkit-text-stroke:0.25px #fff;transform:scaleX(1.06);transform-origin:left">23</div>
<div class="t" style="left:336.50px;top:182.30px;font-size:9.6px;color:#fff;-webkit-text-stroke:0.25px #fff;transform:scaleX(1.06);transform-origin:left">23</div>
<div class="t" style="left:374.00px;top:182.30px;font-size:9.6px;color:#fff;-webkit-text-stroke:0.25px #fff;transform:scaleX(1.06);transform-origin:left">23</div>
<div class="t" style="left:411.50px;top:182.30px;font-size:9.6px;color:#fff;-webkit-text-stroke:0.25px #fff;transform:scaleX(1.06);transform-origin:left">24</div>
<div class="t" style="left:449.00px;top:182.30px;font-size:9.6px;color:#fff;-webkit-text-stroke:0.25px #fff;transform:scaleX(1.06);transform-origin:left">24</div>
<div class="t" style="left:48.5px;width:61.0px;top:194.50px;text-align:center;font-size:9.6px;font-weight:bold;color:#000">70</div>
<div class="t" style="left:111.50px;top:195.30px;font-size:9.6px;color:#fff;-webkit-text-stroke:0.25px #fff;transform:scaleX(1.06);transform-origin:left">10</div>
<div class="t" style="left:149.00px;top:195.30px;font-size:9.6px;color:#fff;-webkit-text-stroke:0.25px #fff;transform:scaleX(1.06);transform-origin:left">15</div>
<div class="t" style="left:186.50px;top:195.30px;font-size:9.6px;color:#fff;-webkit-text-stroke:0.25px #fff;transform:scaleX(1.06);transform-origin:left">20</div>
<div class="t" style="left:224.00px;top:195.30px;font-size:9.6px;color:#fff;-webkit-text-stroke:0.25px #fff;transform:scaleX(1.06);transform-origin:left">22</div>
<div class="t" style="left:261.50px;top:195.30px;font-size:9.6px;color:#fff;-webkit-text-stroke:0.25px #fff;transform:scaleX(1.06);transform-origin:left">22</div>
<div class="t" style="left:299.00px;top:195.30px;font-size:9.6px;color:#fff;-webkit-text-stroke:0.25px #fff;transform:scaleX(1.06);transform-origin:left">22</div>
<div class="t" style="left:336.50px;top:195.30px;font-size:9.6px;color:#fff;-webkit-text-stroke:0.25px #fff;transform:scaleX(1.06);transform-origin:left">22</div>
<div class="t" style="left:374.00px;top:195.30px;font-size:9.6px;color:#fff;-webkit-text-stroke:0.25px #fff;transform:scaleX(1.06);transform-origin:left">22</div>
<div class="t" style="left:411.50px;top:195.30px;font-size:9.6px;color:#fff;-webkit-text-stroke:0.25px #fff;transform:scaleX(1.06);transform-origin:left">22</div>
<div class="t" style="left:449.00px;top:195.30px;font-size:9.6px;color:#fff;-webkit-text-stroke:0.25px #fff;transform:scaleX(1.06);transform-origin:left">22</div>
<div class="t" style="left:48.5px;width:61.0px;top:207.50px;text-align:center;font-size:9.6px;font-weight:bold;color:#000">80</div>
<div class="t" style="left:111.50px;top:208.30px;font-size:9.6px;color:#fff;-webkit-text-stroke:0.25px #fff;transform:scaleX(1.06);transform-origin:left">10</div>
<div class="t" style="left:149.00px;top:208.30px;font-size:9.6px;color:#fff;-webkit-text-stroke:0.25px #fff;transform:scaleX(1.06);transform-origin:left">15</div>
<div class="t" style="left:186.50px;top:208.30px;font-size:9.6px;color:#fff;-webkit-text-stroke:0.25px #fff;transform:scaleX(1.06);transform-origin:left">20</div>
<div class="t" style="left:224.00px;top:208.30px;font-size:9.6px;color:#fff;-webkit-text-stroke:0.25px #fff;transform:scaleX(1.06);transform-origin:left">22</div>
<div class="t" style="left:261.50px;top:208.30px;font-size:9.6px;color:#fff;-webkit-text-stroke:0.25px #fff;transform:scaleX(1.06);transform-origin:left">22</div>
<div class="t" style="left:299.00px;top:208.30px;font-size:9.6px;color:#fff;-webkit-text-stroke:0.25px #fff;transform:scaleX(1.06);transform-origin:left">22</div>
<div class="t" style="left:336.50px;top:208.30px;font-size:9.6px;color:#fff;-webkit-text-stroke:0.25px #fff;transform:scaleX(1.06);transform-origin:left">22</div>
<div class="t" style="left:374.00px;top:208.30px;font-size:9.6px;color:#fff;-webkit-text-stroke:0.25px #fff;transform:scaleX(1.06);transform-origin:left">22</div>
<div class="t" style="left:411.50px;top:208.30px;font-size:9.6px;color:#fff;-webkit-text-stroke:0.25px #fff;transform:scaleX(1.06);transform-origin:left">22</div>
<div class="t" style="left:449.00px;top:208.30px;font-size:9.6px;color:#fff;-webkit-text-stroke:0.25px #fff;transform:scaleX(1.06);transform-origin:left">22</div>
<div class="t" style="left:48.5px;width:61.0px;top:220.00px;text-align:center;font-size:9.6px;font-weight:bold;color:#000">90</div>
<div class="t" style="left:111.50px;top:220.80px;font-size:9.6px;color:#fff;-webkit-text-stroke:0.25px #fff;transform:scaleX(1.06);transform-origin:left">10</div>
<div class="t" style="left:149.00px;top:220.80px;font-size:9.6px;color:#fff;-webkit-text-stroke:0.25px #fff;transform:scaleX(1.06);transform-origin:left">15</div>
<div class="t" style="left:186.50px;top:220.80px;font-size:9.6px;color:#fff;-webkit-text-stroke:0.25px #fff;transform:scaleX(1.06);transform-origin:left">20</div>
<div class="t" style="left:224.00px;top:220.80px;font-size:9.6px;color:#fff;-webkit-text-stroke:0.25px #fff;transform:scaleX(1.06);transform-origin:left">22</div>
<div class="t" style="left:261.50px;top:220.80px;font-size:9.6px;color:#fff;-webkit-text-stroke:0.25px #fff;transform:scaleX(1.06);transform-origin:left">22</div>
<div class="t" style="left:299.00px;top:220.80px;font-size:9.6px;color:#fff;-webkit-text-stroke:0.25px #fff;transform:scaleX(1.06);transform-origin:left">22</div>
<div class="t" style="left:336.50px;top:220.80px;font-size:9.6px;color:#fff;-webkit-text-stroke:0.25px #fff;transform:scaleX(1.06);transform-origin:left">22</div>
<div class="t" style="left:374.00px;top:220.80px;font-size:9.6px;color:#fff;-webkit-text-stroke:0.25px #fff;transform:scaleX(1.06);transform-origin:left">22</div>
<div class="t" style="left:411.50px;top:220.80px;font-size:9.6px;color:#fff;-webkit-text-stroke:0.25px #fff;transform:scaleX(1.06);transform-origin:left">22</div>
<div class="t" style="left:449.00px;top:220.80px;font-size:9.6px;color:#fff;-webkit-text-stroke:0.25px #fff;transform:scaleX(1.06);transform-origin:left">22</div>
<div class="a" style="left:79.3px;top:246px;width:36.2px;height:13.3px;background:#d4d0c8;border:1px solid #404040;border-right-width:1.6px"></div>
<div class="a" style="left:80.3px;top:247px;width:33.5px;height:11.3px;border-top:1px solid #f4f2ee;border-left:1px solid #f4f2ee"></div>
<div class="t" style="left:82.6px;top:249.9px;font-size:8.9px;color:#000;-webkit-text-stroke:0.18px #000;letter-spacing:-0.15px">Options</div>
<div class="a" style="left:25px;top:260.3px;width:55px;height:1.3px;background:#404040"></div>
<div class="a" style="left:79.2px;top:247px;width:1.1px;height:14.5px;background:#404040"></div>
<div class="t" style="left:29.2px;top:251.2px;font-size:8.9px;color:#000;-webkit-text-stroke:0.18px #000;letter-spacing:-0.15px">Ignition Map</div>
<div class="a" style="left:22px;top:264px;width:595px;height:3px;background:#e2ded8"></div>
<div class="a" style="left:216.5px;top:265px;width:5.5px;height:196px;background:#e2e0dc"></div>
<div class="a" style="left:416px;top:265px;width:5px;height:196px;background:#e2e0dc"></div>
<div class="a" style="left:22.5px;top:267px;width:194.5px;height:13px;background:linear-gradient(#8e8a86 0px,#96928e 3px,#a29e9a 6px,#aaa6a2 10px,#b0acaa 11.5px,#c6c2be 12.2px,#c6c2be 13px);border-top:1px solid #7c7874"></div>
<div class="t" style="left:24.6px;top:270.3px;font-size:8.7px;color:#000;-webkit-text-stroke:0.18px #000;letter-spacing:-0.12px">Ignition Advance</div>
<svg class="a" style="left:207.5px;top:269.8px" width="8" height="8"><path d="M1.2 1.2 L6.6 6.6 M6.6 1.2 L1.2 6.6" stroke="#000" stroke-width="1.4"/></svg>
<div class="a" style="left:23.0px;top:280.3px;width:194.0px;height:179.9px;background:#000"></div>
<div class="a" style="left:221.5px;top:267px;width:195.0px;height:13px;background:linear-gradient(#8e8a86 0px,#96928e 3px,#a29e9a 6px,#aaa6a2 10px,#b0acaa 11.5px,#c6c2be 12.2px,#c6c2be 13px);border-top:1px solid #7c7874"></div>
<div class="t" style="left:223.6px;top:270.3px;font-size:8.7px;color:#000;-webkit-text-stroke:0.18px #000;letter-spacing:-0.12px">RPM</div>
<svg class="a" style="left:407.0px;top:269.8px" width="8" height="8"><path d="M1.2 1.2 L6.6 6.6 M6.6 1.2 L1.2 6.6" stroke="#000" stroke-width="1.4"/></svg>
<div class="a" style="left:222.0px;top:280.3px;width:193.2px;height:179.9px;background:#000"></div>
<div class="a" style="left:420.5px;top:267px;width:195.0px;height:13px;background:linear-gradient(#8e8a86 0px,#96928e 3px,#a29e9a 6px,#aaa6a2 10px,#b0acaa 11.5px,#c6c2be 12.2px,#c6c2be 13px);border-top:1px solid #7c7874"></div>
<div class="t" style="left:422.6px;top:270.3px;font-size:8.7px;color:#000;-webkit-text-stroke:0.18px #000;letter-spacing:-0.12px">Load</div>
<svg class="a" style="left:606.0px;top:269.8px" width="8" height="8"><path d="M1.2 1.2 L6.6 6.6 M6.6 1.2 L1.2 6.6" stroke="#000" stroke-width="1.4"/></svg>
<div class="a" style="left:421.0px;top:280.3px;width:192.60000000000002px;height:179.9px;background:#000"></div>
<svg class="a" style="left:0;top:0" width="640" height="480"><polygon points="31.7,303.0 98.3,303.0 82.5,318.8 47.5,318.8" fill="#0b2f0b" stroke="#000" stroke-width="1.3"/><polygon points="98.3,303.0 98.3,369.8 82.5,361.9 82.5,318.8" fill="#22f822" stroke="#000" stroke-width="1.3"/><polygon points="98.3,369.8 98.3,436.0 82.5,420.2 82.5,377.7" fill="#22f822" stroke="#000" stroke-width="1.3"/><polygon points="31.7,436.0 98.3,436.0 82.5,420.2 47.5,420.2" fill="#0b2f0b" stroke="#000" stroke-width="1.3"/><polygon points="31.7,369.8 47.5,377.7 47.5,420.2 31.7,436.0" fill="#0b2f0b" stroke="#000" stroke-width="1.3"/><polygon points="31.7,303.0 47.5,318.8 47.5,361.9 31.7,369.8" fill="#0b2f0b" stroke="#000" stroke-width="1.3"/><polygon points="31.7,369.8 47.5,361.9 82.5,361.9 98.3,369.8 82.5,377.7 47.5,377.7" fill="#0b2f0b" stroke="#000" stroke-width="1.3"/><circle cx="109.4" cy="429" r="7" fill="#0b2f0b"/><polygon points="125.0,303.0 191.6,303.0 175.8,318.8 140.8,318.8" fill="#0b2f0b" stroke="#000" stroke-width="1.3"/><polygon points="191.6,303.0 191.6,369.8 175.8,361.9 175.8,318.8" fill="#22f822" stroke="#000" stroke-width="1.3"/><polygon points="191.6,369.8 191.6,436.0 175.8,420.2 175.8,377.7" fill="#22f822" stroke="#000" stroke-width="1.3"/><polygon points="125.0,436.0 191.6,436.0 175.8,420.2 140.8,420.2" fill="#0b2f0b" stroke="#000" stroke-width="1.3"/><polygon points="125.0,369.8 140.8,377.7 140.8,420.2 125.0,436.0" fill="#0b2f0b" stroke="#000" stroke-width="1.3"/><polygon points="125.0,303.0 140.8,318.8 140.8,361.9 125.0,369.8" fill="#22f822" stroke="#000" stroke-width="1.3"/><polygon points="125.0,369.8 140.8,361.9 175.8,361.9 191.6,369.8 175.8,377.7 140.8,377.7" fill="#22f822" stroke="#000" stroke-width="1.3"/><circle cx="202.7" cy="429" r="7" fill="#0b2f0b"/></svg>
<svg class="a" style="left:0;top:0" width="640" height="480"><circle cx="318.75" cy="370.4" r="89.4" fill="#414141"/><defs><clipPath id="cc318"><circle cx="318.75" cy="370.4" r="89.10000000000001"/></clipPath><filter id="bl318" x="-10%" y="-10%" width="120%" height="120%"><feGaussianBlur stdDeviation="1.6"/></filter></defs><g clip-path="url(#cc318)"><path d="M225.80,410.93 L318.75,370.4 L326.25,373.4 L329.75,470.4 L428.75,470.4 L428.75,270.4 L208.75,270.4 L208.75,410.93 Z" fill="#55373b" filter="url(#bl318)"/></g><path d="M237.63,405.77 A88.5,88.5 0 1 1 331.07,458.04" fill="none" stroke="#8a3434" stroke-width="1.8"/><line x1="304.72" y1="449.97" x2="303.26" y2="458.24" stroke="#fff" stroke-width="3.2"/><line x1="294.53" y1="450.62" x2="293.03" y2="455.60" stroke="#e4e4e4" stroke-width="1.1"/><line x1="285.20" y1="447.19" x2="283.12" y2="451.96" stroke="#e4e4e4" stroke-width="1.1"/><line x1="276.34" y1="442.68" x2="273.71" y2="447.16" stroke="#e4e4e4" stroke-width="1.1"/><line x1="268.08" y1="437.15" x2="264.94" y2="441.29" stroke="#e4e4e4" stroke-width="1.1"/><line x1="262.62" y1="428.52" x2="256.79" y2="434.57" stroke="#fff" stroke-width="3.2"/><line x1="253.81" y1="423.36" x2="249.78" y2="426.65" stroke="#e4e4e4" stroke-width="1.1"/><line x1="248.00" y1="415.30" x2="243.60" y2="418.09" stroke="#e4e4e4" stroke-width="1.1"/><line x1="243.18" y1="406.61" x2="238.49" y2="408.86" stroke="#e4e4e4" stroke-width="1.1"/><line x1="239.42" y1="397.41" x2="234.50" y2="399.08" stroke="#e4e4e4" stroke-width="1.1"/><line x1="239.72" y1="387.20" x2="231.50" y2="388.95" stroke="#fff" stroke-width="3.2"/><line x1="235.29" y1="378.00" x2="230.12" y2="378.47" stroke="#e4e4e4" stroke-width="1.1"/><line x1="234.98" y1="368.06" x2="229.78" y2="367.91" stroke="#e4e4e4" stroke-width="1.1"/><line x1="235.85" y1="358.16" x2="230.70" y2="357.40" stroke="#e4e4e4" stroke-width="1.1"/><line x1="237.88" y1="348.43" x2="232.86" y2="347.07" stroke="#e4e4e4" stroke-width="1.1"/><line x1="243.83" y1="340.13" x2="236.05" y2="336.99" stroke="#fff" stroke-width="3.2"/><line x1="245.32" y1="330.03" x2="240.76" y2="327.52" stroke="#e4e4e4" stroke-width="1.1"/><line x1="250.61" y1="321.62" x2="246.38" y2="318.59" stroke="#e4e4e4" stroke-width="1.1"/><line x1="256.87" y1="313.89" x2="253.03" y2="310.39" stroke="#e4e4e4" stroke-width="1.1"/><line x1="263.99" y1="306.96" x2="260.60" y2="303.03" stroke="#e4e4e4" stroke-width="1.1"/><line x1="273.57" y1="303.41" x2="268.87" y2="296.45" stroke="#fff" stroke-width="3.2"/><line x1="280.45" y1="295.87" x2="278.07" y2="291.24" stroke="#e4e4e4" stroke-width="1.1"/><line x1="289.54" y1="291.86" x2="287.73" y2="286.98" stroke="#e4e4e4" stroke-width="1.1"/><line x1="299.05" y1="288.95" x2="297.82" y2="283.90" stroke="#e4e4e4" stroke-width="1.1"/><line x1="308.83" y1="287.19" x2="308.21" y2="282.03" stroke="#e4e4e4" stroke-width="1.1"/><line x1="318.75" y1="289.60" x2="318.75" y2="281.20" stroke="#fff" stroke-width="3.2"/><line x1="328.67" y1="287.19" x2="329.29" y2="282.03" stroke="#e4e4e4" stroke-width="1.1"/><line x1="338.45" y1="288.95" x2="339.68" y2="283.90" stroke="#e4e4e4" stroke-width="1.1"/><line x1="347.96" y1="291.86" x2="349.77" y2="286.98" stroke="#e4e4e4" stroke-width="1.1"/><line x1="357.05" y1="295.87" x2="359.43" y2="291.24" stroke="#e4e4e4" stroke-width="1.1"/><line x1="363.93" y1="303.41" x2="368.63" y2="296.45" stroke="#fff" stroke-width="3.2"/><line x1="373.51" y1="306.96" x2="376.90" y2="303.03" stroke="#e4e4e4" stroke-width="1.1"/><line x1="380.63" y1="313.89" x2="384.47" y2="310.39" stroke="#e4e4e4" stroke-width="1.1"/><line x1="386.89" y1="321.62" x2="391.12" y2="318.59" stroke="#e4e4e4" stroke-width="1.1"/><line x1="392.18" y1="330.03" x2="396.74" y2="327.52" stroke="#e4e4e4" stroke-width="1.1"/><line x1="393.67" y1="340.13" x2="401.45" y2="336.99" stroke="#fff" stroke-width="3.2"/><line x1="399.62" y1="348.43" x2="404.64" y2="347.07" stroke="#e4e4e4" stroke-width="1.1"/><line x1="401.65" y1="358.16" x2="406.80" y2="357.40" stroke="#e4e4e4" stroke-width="1.1"/><line x1="402.52" y1="368.06" x2="407.72" y2="367.91" stroke="#e4e4e4" stroke-width="1.1"/><line x1="402.21" y1="378.00" x2="407.38" y2="378.47" stroke="#e4e4e4" stroke-width="1.1"/><line x1="397.78" y1="387.20" x2="406.00" y2="388.95" stroke="#fff" stroke-width="3.2"/><line x1="398.08" y1="397.41" x2="403.00" y2="399.08" stroke="#e4e4e4" stroke-width="1.1"/><line x1="394.32" y1="406.61" x2="399.01" y2="408.86" stroke="#e4e4e4" stroke-width="1.1"/><line x1="389.50" y1="415.30" x2="393.90" y2="418.09" stroke="#e4e4e4" stroke-width="1.1"/><line x1="383.69" y1="423.36" x2="387.72" y2="426.65" stroke="#e4e4e4" stroke-width="1.1"/><line x1="374.88" y1="428.52" x2="380.71" y2="434.57" stroke="#fff" stroke-width="3.2"/><line x1="369.42" y1="437.15" x2="372.56" y2="441.29" stroke="#e4e4e4" stroke-width="1.1"/><line x1="361.16" y1="442.68" x2="363.79" y2="447.16" stroke="#e4e4e4" stroke-width="1.1"/><line x1="352.30" y1="447.19" x2="354.38" y2="451.96" stroke="#e4e4e4" stroke-width="1.1"/><line x1="342.97" y1="450.62" x2="344.47" y2="455.60" stroke="#e4e4e4" stroke-width="1.1"/><line x1="332.78" y1="449.97" x2="334.24" y2="458.24" stroke="#fff" stroke-width="3.2"/><text x="306.25" y="448.41" text-anchor="middle" font-family="Liberation Sans" font-size="15.8" fill="#fff">0</text><text x="268.73" y="429.29" text-anchor="middle" font-family="Liberation Sans" font-size="15.8" fill="#fff">10</text><text x="248.32" y="392.47" text-anchor="middle" font-family="Liberation Sans" font-size="15.8" fill="#fff">20</text><text x="251.99" y="350.53" text-anchor="middle" font-family="Liberation Sans" font-size="15.8" fill="#fff">30</text><text x="278.49" y="317.81" text-anchor="middle" font-family="Liberation Sans" font-size="15.8" fill="#fff">40</text><text x="318.75" y="305.50" text-anchor="middle" font-family="Liberation Sans" font-size="15.8" fill="#fff">50</text><text x="359.01" y="317.81" text-anchor="middle" font-family="Liberation Sans" font-size="15.8" fill="#fff">60</text><text x="385.51" y="350.53" text-anchor="middle" font-family="Liberation Sans" font-size="15.8" fill="#fff">70</text><text x="389.18" y="392.47" text-anchor="middle" font-family="Liberation Sans" font-size="15.8" fill="#fff">80</text><text x="368.77" y="429.29" text-anchor="middle" font-family="Liberation Sans" font-size="15.8" fill="#fff">90</text><text x="331.25" y="448.41" text-anchor="middle" font-family="Liberation Sans" font-size="15.8" fill="#fff">100</text><line x1="238.72" y1="402.03" x2="299.22" y2="375.64" stroke="#e6dcae" stroke-width="2.6" stroke-dasharray="1.1 3.9" opacity="0.85"/><line x1="318.75" y1="370.4" x2="238.18" y2="405.53" stroke="#f00000" stroke-width="4"/><circle cx="318.75" cy="370.4" r="7.2" fill="#ff0000"/><text x="318.75" y="360.20" text-anchor="middle" font-family="Liberation Sans" font-size="17.6" fill="#fff">1660</text><text x="318.25" y="399.20" text-anchor="middle" font-family="Liberation Sans" font-size="16.4" fill="#fff" textLength="74.5" lengthAdjust="spacingAndGlyphs">RPM X 100</text></svg>
<svg class="a" style="left:0;top:0" width="640" height="480"><circle cx="517.4" cy="370.4" r="89.3" fill="#414141"/><line x1="503.39" y1="449.87" x2="501.93" y2="458.15" stroke="#fff" stroke-width="3.2"/><line x1="493.21" y1="450.53" x2="491.71" y2="455.51" stroke="#e4e4e4" stroke-width="1.1"/><line x1="483.89" y1="447.10" x2="481.81" y2="451.86" stroke="#e4e4e4" stroke-width="1.1"/><line x1="475.04" y1="442.59" x2="472.41" y2="447.08" stroke="#e4e4e4" stroke-width="1.1"/><line x1="466.80" y1="437.07" x2="463.65" y2="441.21" stroke="#e4e4e4" stroke-width="1.1"/><line x1="461.34" y1="428.45" x2="455.51" y2="434.49" stroke="#fff" stroke-width="3.2"/><line x1="452.54" y1="423.30" x2="448.51" y2="426.59" stroke="#e4e4e4" stroke-width="1.1"/><line x1="446.73" y1="415.25" x2="442.34" y2="418.04" stroke="#e4e4e4" stroke-width="1.1"/><line x1="441.92" y1="406.57" x2="437.23" y2="408.81" stroke="#e4e4e4" stroke-width="1.1"/><line x1="438.17" y1="397.37" x2="433.24" y2="399.05" stroke="#e4e4e4" stroke-width="1.1"/><line x1="438.46" y1="387.18" x2="430.25" y2="388.92" stroke="#fff" stroke-width="3.2"/><line x1="434.04" y1="377.99" x2="428.87" y2="378.46" stroke="#e4e4e4" stroke-width="1.1"/><line x1="433.73" y1="368.06" x2="428.53" y2="367.92" stroke="#e4e4e4" stroke-width="1.1"/><line x1="434.60" y1="358.17" x2="429.45" y2="357.41" stroke="#e4e4e4" stroke-width="1.1"/><line x1="436.63" y1="348.45" x2="431.61" y2="347.09" stroke="#e4e4e4" stroke-width="1.1"/><line x1="442.58" y1="340.17" x2="434.79" y2="337.02" stroke="#fff" stroke-width="3.2"/><line x1="444.05" y1="330.08" x2="439.50" y2="327.57" stroke="#e4e4e4" stroke-width="1.1"/><line x1="449.34" y1="321.68" x2="445.12" y2="318.65" stroke="#e4e4e4" stroke-width="1.1"/><line x1="455.59" y1="313.96" x2="451.75" y2="310.45" stroke="#e4e4e4" stroke-width="1.1"/><line x1="462.71" y1="307.04" x2="459.31" y2="303.10" stroke="#e4e4e4" stroke-width="1.1"/><line x1="472.27" y1="303.50" x2="467.58" y2="296.53" stroke="#fff" stroke-width="3.2"/><line x1="479.14" y1="295.96" x2="476.76" y2="291.33" stroke="#e4e4e4" stroke-width="1.1"/><line x1="488.22" y1="291.95" x2="486.41" y2="287.08" stroke="#e4e4e4" stroke-width="1.1"/><line x1="497.72" y1="289.05" x2="496.50" y2="283.99" stroke="#e4e4e4" stroke-width="1.1"/><line x1="507.49" y1="287.29" x2="506.87" y2="282.13" stroke="#e4e4e4" stroke-width="1.1"/><line x1="517.40" y1="289.70" x2="517.40" y2="281.30" stroke="#fff" stroke-width="3.2"/><line x1="527.31" y1="287.29" x2="527.93" y2="282.13" stroke="#e4e4e4" stroke-width="1.1"/><line x1="537.08" y1="289.05" x2="538.30" y2="283.99" stroke="#e4e4e4" stroke-width="1.1"/><line x1="546.58" y1="291.95" x2="548.39" y2="287.08" stroke="#e4e4e4" stroke-width="1.1"/><line x1="555.66" y1="295.96" x2="558.04" y2="291.33" stroke="#e4e4e4" stroke-width="1.1"/><line x1="562.53" y1="303.50" x2="567.22" y2="296.53" stroke="#fff" stroke-width="3.2"/><line x1="572.09" y1="307.04" x2="575.49" y2="303.10" stroke="#e4e4e4" stroke-width="1.1"/><line x1="579.21" y1="313.96" x2="583.05" y2="310.45" stroke="#e4e4e4" stroke-width="1.1"/><line x1="585.46" y1="321.68" x2="589.68" y2="318.65" stroke="#e4e4e4" stroke-width="1.1"/><line x1="590.75" y1="330.08" x2="595.30" y2="327.57" stroke="#e4e4e4" stroke-width="1.1"/><line x1="592.22" y1="340.17" x2="600.01" y2="337.02" stroke="#fff" stroke-width="3.2"/><line x1="598.17" y1="348.45" x2="603.19" y2="347.09" stroke="#e4e4e4" stroke-width="1.1"/><line x1="600.20" y1="358.17" x2="605.35" y2="357.41" stroke="#e4e4e4" stroke-width="1.1"/><line x1="601.07" y1="368.06" x2="606.27" y2="367.92" stroke="#e4e4e4" stroke-width="1.1"/><line x1="600.76" y1="377.99" x2="605.93" y2="378.46" stroke="#e4e4e4" stroke-width="1.1"/><line x1="596.34" y1="387.18" x2="604.55" y2="388.92" stroke="#fff" stroke-width="3.2"/><line x1="596.63" y1="397.37" x2="601.56" y2="399.05" stroke="#e4e4e4" stroke-width="1.1"/><line x1="592.88" y1="406.57" x2="597.57" y2="408.81" stroke="#e4e4e4" stroke-width="1.1"/><line x1="588.07" y1="415.25" x2="592.46" y2="418.04" stroke="#e4e4e4" stroke-width="1.1"/><line x1="582.26" y1="423.30" x2="586.29" y2="426.59" stroke="#e4e4e4" stroke-width="1.1"/><line x1="573.46" y1="428.45" x2="579.29" y2="434.49" stroke="#fff" stroke-width="3.2"/><line x1="568.00" y1="437.07" x2="571.15" y2="441.21" stroke="#e4e4e4" stroke-width="1.1"/><line x1="559.76" y1="442.59" x2="562.39" y2="447.08" stroke="#e4e4e4" stroke-width="1.1"/><line x1="550.91" y1="447.10" x2="552.99" y2="451.86" stroke="#e4e4e4" stroke-width="1.1"/><line x1="541.59" y1="450.53" x2="543.09" y2="455.51" stroke="#e4e4e4" stroke-width="1.1"/><line x1="531.41" y1="449.87" x2="532.87" y2="458.15" stroke="#fff" stroke-width="3.2"/><text x="504.90" y="448.41" text-anchor="middle" font-family="Liberation Sans" font-size="15.8" fill="#fff">0</text><text x="467.38" y="429.29" text-anchor="middle" font-family="Liberation Sans" font-size="15.8" fill="#fff">10</text><text x="446.97" y="392.47" text-anchor="middle" font-family="Liberation Sans" font-size="15.8" fill="#fff">20</text><text x="450.64" y="350.53" text-anchor="middle" font-family="Liberation Sans" font-size="15.8" fill="#fff">30</text><text x="477.14" y="317.81" text-anchor="middle" font-family="Liberation Sans" font-size="15.8" fill="#fff">40</text><text x="517.40" y="305.50" text-anchor="middle" font-family="Liberation Sans" font-size="15.8" fill="#fff">50</text><text x="557.66" y="317.81" text-anchor="middle" font-family="Liberation Sans" font-size="15.8" fill="#fff">60</text><text x="584.16" y="350.53" text-anchor="middle" font-family="Liberation Sans" font-size="15.8" fill="#fff">70</text><text x="587.83" y="392.47" text-anchor="middle" font-family="Liberation Sans" font-size="15.8" fill="#fff">80</text><text x="567.42" y="429.29" text-anchor="middle" font-family="Liberation Sans" font-size="15.8" fill="#fff">90</text><text x="529.90" y="448.41" text-anchor="middle" font-family="Liberation Sans" font-size="15.8" fill="#fff">100</text><line x1="517.4" y1="370.4" x2="452.77" y2="429.83" stroke="#e41010" stroke-width="3.5"/><circle cx="517.4" cy="370.4" r="7.2" fill="#ff0000"/><text x="517.4" y="360.00" text-anchor="middle" font-family="Liberation Sans" font-size="17.6" fill="#fff">11</text><text x="516.9" y="398.80" text-anchor="middle" font-family="Liberation Sans" font-size="16.4" fill="#fff" textLength="47.5" lengthAdjust="spacingAndGlyphs">TPS %</text></svg>
<div class="a" style="left:22px;top:460.5px;width:595px;height:19.5px;background:#d4d0c8;border-top:1px solid #f0eee8"></div>
<div class="a" style="left:22.5px;top:463px;width:226.7px;height:15px;border-top:1px solid #8a8680;border-left:1px solid #8a8680;border-bottom:1px solid #fff;border-right:1px solid #fff"></div>
<div class="a" style="left:251px;top:463px;width:225.8px;height:15px;border-top:1px solid #8a8680;border-left:1px solid #8a8680;border-bottom:1px solid #fff;border-right:1px solid #fff"></div>
<div class="a" style="left:477.8px;top:463px;width:138.2px;height:15px;border-top:1px solid #8a8680;border-left:1px solid #8a8680;border-bottom:1px solid #fff;border-right:1px solid #fff"></div>
<div class="t" style="left:479.5px;top:465.6px;font-size:9.2px;color:#000;-webkit-text-stroke:0.18px #000;letter-spacing:-0.05px">Outputs</div>
<div class="a" style="left:512.4px;top:463.2px;width:12.4px;height:12.4px;border-radius:50%;background:radial-gradient(circle at 60% 60%,#e8f8e0 60%,#dcdad4 100%)"></div>
<div class="a" style="left:514.2px;top:465.0px;width:8.8px;height:8.8px;border-radius:50%;background:radial-gradient(circle at 32% 30%,rgba(255,255,255,0.55) 0,rgba(255,255,255,0) 28%),#1ee01e"></div>
<div class="a" style="left:527.5999999999999px;top:463.2px;width:12.4px;height:12.4px;border-radius:50%;background:radial-gradient(circle at 60% 60%,#e8f8e0 60%,#dcdad4 100%)"></div>
<div class="a" style="left:529.4px;top:465.0px;width:8.8px;height:8.8px;border-radius:50%;background:radial-gradient(circle at 32% 30%,rgba(255,255,255,0.55) 0,rgba(255,255,255,0) 28%),#1ee01e"></div>
<div class="a" style="left:542.8px;top:463.2px;width:12.4px;height:12.4px;border-radius:50%;background:radial-gradient(circle at 60% 60%,#e8f8e0 60%,#dcdad4 100%)"></div>
<div class="a" style="left:544.6px;top:465.0px;width:8.8px;height:8.8px;border-radius:50%;background:radial-gradient(circle at 32% 30%,rgba(255,255,255,0.55) 0,rgba(255,255,255,0) 28%),#1ee01e"></div>
<div class="a" style="left:557.9px;top:463.2px;width:12.4px;height:12.4px;border-radius:50%;background:radial-gradient(circle at 60% 60%,#e8f8e0 60%,#dcdad4 100%)"></div>
<div class="a" style="left:559.7px;top:465.0px;width:8.8px;height:8.8px;border-radius:50%;background:radial-gradient(circle at 32% 30%,rgba(255,255,255,0.55) 0,rgba(255,255,255,0) 28%),#1ee01e"></div>
<div class="a" style="left:577.8px;top:463.2px;width:12.4px;height:12.4px;border-radius:50%;background:radial-gradient(circle at 60% 60%,#f0f0e8 60%,#dcdad4 100%)"></div>
<div class="a" style="left:579.6px;top:465.0px;width:8.8px;height:8.8px;border-radius:50%;background:radial-gradient(circle at 32% 30%,rgba(255,255,255,0.55) 0,rgba(255,255,255,0) 28%),#545018"></div>
<div class="a" style="left:592.8px;top:463.2px;width:12.4px;height:12.4px;border-radius:50%;background:radial-gradient(circle at 60% 60%,#f4f0ee 60%,#dcdad4 100%)"></div>
<div class="a" style="left:594.6px;top:465.0px;width:8.8px;height:8.8px;border-radius:50%;background:radial-gradient(circle at 32% 30%,rgba(255,255,255,0.55) 0,rgba(255,255,255,0) 28%),#600a10"></div>
<svg class="a" style="left:606px;top:466px" width="12" height="12"><path d="M11 2 L2 11 M11 6 L6 11 M11 10 L10 11" stroke="#808080" stroke-width="1"/><path d="M11 3 L3 11 M11 7 L7 11" stroke="#fff" stroke-width="1"/></svg>
</body></html>
